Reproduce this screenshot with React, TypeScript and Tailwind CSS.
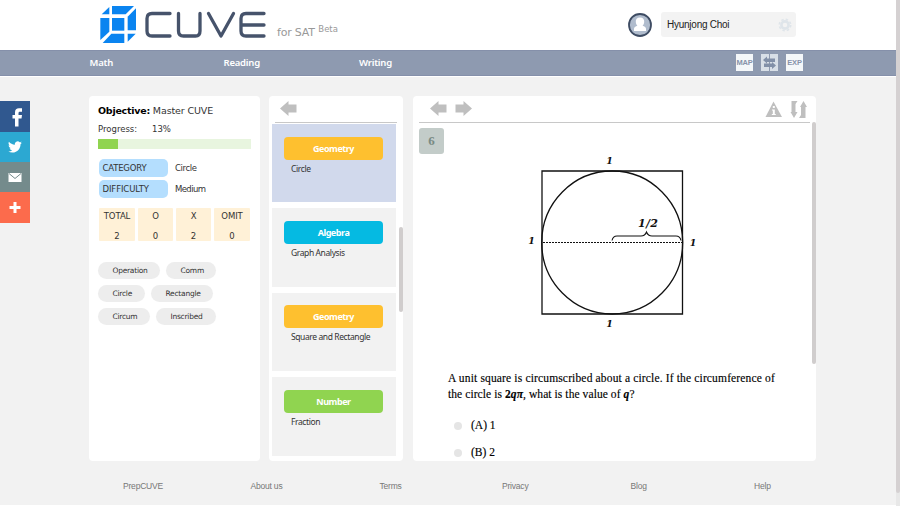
import React from "react";

const verdana = "font-['DejaVu_Sans',sans-serif]";
const noto = "font-['Noto_Sans',sans-serif]";
const arial = "font-['Liberation_Sans',sans-serif]";

function Logo() {
  return (
    <svg className="block" width="170" height="40" viewBox="98 4 170 40" fill="none">
      <g fill="#0a84f0" transform="translate(80 0) scale(.3333)">
        <path d="M96 18h66l-25 25H96z" />
        <path d="M88 21v22H65z" />
        <path d="M96 54h37v38H96z" />
        <path d="M61 54h27v41l-27 25z" />
        <path d="M168 25v66h-25V50z" />
        <path d="M94 101h39v28H68z" />
        <path d="M143 101h24l-24 24z" />
      </g>
      <g stroke="#46536b" strokeWidth="3.300" strokeLinecap="round" strokeLinejoin="round">
        <path d="M170 13.500h-18q-5 0-5 5v12.500q0 5 5 5h18" />
        <path d="M178.500 13.500v17.500q0 5 5 5h12q4.500 0 4.500-5v-17.500" />
        <path d="M208.500 13.500l12.500 22.500 12.500-22.500" />
        <path d="M264 13.500h-18q-5 0-5 5v12.500q0 5 5 5h18M241 25h23" />
      </g>
    </svg>
  );
}

function Arrow({ flip = false }: { flip?: boolean }) {
  return (
    <svg className={flip ? "block -scale-x-100" : "block"} width="17" height="15" viewBox="0 0 17 15" fill="#bfbfbf">
      <path d="M0 7.500L8.500 0v3.500H16.500v8H8.500V15z" />
    </svg>
  );
}

function Header() {
  return (
    <header className="flex h-[50px] bg-white">
      <div className="ml-[98px] mt-1"><Logo /></div>
      <div className={`ml-[9px] mt-[25px] h-5 w-20 whitespace-nowrap text-[11px] leading-[16px] text-[#999] ${verdana}`}>
        <span className="tracking-[-0.2px]">for SAT</span> <span className="relative -top-[4px] text-[8.500px]">Beta</span>
      </div>
      <svg className="ml-[271px] mt-[13px]" width="24" height="24" viewBox="0 0 24 24">
        <circle cx="12" cy="12" r="11" fill="#b0bccd" stroke="#3e4c63" strokeWidth="1.800" />
        <path d="M12 4.500c3 0 4.500 2 4.200 4.600-.2 1.700-.7 2.900-1.600 3.600 2 .8 3.400 1.500 3.400 3v2.300H6v-2.300c0-1.500 1.400-2.200 3.400-3-.9-.7-1.400-1.900-1.600-3.600C7.500 6.500 9 4.500 12 4.500z" fill="#fff" />
      </svg>
      <div className={`ml-[9px] mt-3 flex h-[25px] w-[135px] items-center justify-between rounded-[3px] bg-[#f3f3f3] pl-1.5 pr-1 text-[10px] text-[#222] ${arial}`}>
        <span className="tracking-[-0.25px]">Hyunjong Choi</span>
        <svg width="14" height="14" viewBox="0 0 14 14" fill="none" stroke="#dfe5ea">
          <circle cx="7" cy="7" r="3.600" strokeWidth="2.600" />
          <circle cx="7" cy="7" r="5.700" strokeWidth="1.600" strokeDasharray="2.400 2.080" />
        </svg>
      </div>
    </header>
  );
}

function Nav() {
  return (
    <nav className={`flex h-[26px] border-b border-t border-[#8590aa] bg-[#8e9ab0] text-[9.500px] font-semibold leading-6 tracking-[-0.2px] text-white ${noto}`}>
      <span className="ml-[89.500px] w-[134px]">Math</span>
      <span className="w-[135.500px]">Reading</span>
      <span className="w-[377px]">Writing</span>
      <div className={`mt-[3px] flex gap-2 text-[7.500px] font-bold tracking-[-0.2px] text-[#8793aa] ${arial}`}>
        <span className="h-[17px] w-[17px] bg-[#f4f7f9] p-[3px]"><span className="-mx-[3px] block h-[11px] text-center leading-[12px]">MAP</span></span>
        <svg width="17" height="17" viewBox="0 0 17 17"><path fill="#d8dfe7" d="M0 0h17v17H0z" /><path d="M8.500 0v17" stroke="#8e9ab0" /><path d="M2 6l4-3.500v2h8v3.500H6v1.500zM15 11.500l-4 3.500v-2H3V9.500h8V8z" fill="#8290a8" /></svg>
        <span className="h-[17px] w-[17px] bg-[#f4f7f9] p-[3px]"><span className="-mx-[3px] block h-[11px] text-center leading-[12px]">EXP</span></span>
      </div>
    </nav>
  );
}

function Social() {
  return (
    <aside className="mt-[24px] flex h-[122px] w-[30px] flex-col">
      <div className="h-[31px] bg-[#30588f]"><svg width="30" height="31" viewBox="0 0 30 31"><path fill="#fff" d="M15 25.500v-8H12.500V14H15v-2.500c0-3 1.500-4.200 4-4.200h3v3.500h-2c-1.200 0-1.500.5-1.500 1.500V14H22l-.5 3.500h-3v8z" /></svg></div>
      <div className="h-[30px] bg-[#2ca8d2]"><svg width="30" height="30" viewBox="0 0 30 30"><path transform="translate(8 8) scale(.58)" fill="#fff" d="M23.950 4.570a10 10 0 01-2.820.77 4.960 4.960 0 002.160-2.720c-.95.550-2 .96-3.120 1.180a4.920 4.920 0 00-8.380 4.480C7.690 8.100 4.070 6.130 1.640 3.160a4.820 4.820 0 00-.67 2.480c0 1.710.87 3.210 2.190 4.100a4.900 4.900 0 01-2.230-.62v.06a4.920 4.920 0 003.950 4.830 5 5 0 01-2.210.08 4.940 4.940 0 004.600 3.420A9.870 9.870 0 010 19.540a14 14 0 007.550 2.210c9.050 0 14-7.500 14-13.980 0-.21 0-.42-.02-.63a9.940 9.940 0 002.420-2.570z" /></svg></div>
      <div className="h-[30px] bg-[#748b8c]"><svg width="30" height="30" viewBox="0 0 30 30"><path fill="#fff" d="M8.500 11h13v9h-13z" /><path d="M9 11.500l6 5 6-5" fill="none" stroke="#748b8c" /></svg></div>
      <div className="h-[31px] bg-[#fc6b4c]"><svg width="30" height="31" viewBox="0 0 30 31"><path d="M9.500 15.500h11M15 10v11" stroke="#fff" strokeWidth="3" /></svg></div>
    </aside>
  );
}

function Stat({ label, value, w }: { label: string; value: string; w: string }) {
  return (
    <div className={`flex h-[33px] flex-col justify-between rounded-[1px] bg-[#fff1d7] pt-[3px] text-center text-[8.500px] leading-[10px] ${w}`}>
      <span className="tracking-[-0.1px]">{label}</span><span>{value}</span>
    </div>
  );
}

function Tag({ text, w }: { text: string; w: string }) {
  return <span className={`h-[17px] rounded-full bg-[#ededed] pl-[14.500px] text-[7.500px] leading-[17px] tracking-[-0.25px] ${w}`}>{text}</span>;
}

function Summary() {
  return (
    <section className={`h-[365px] w-[171px] rounded-[4px] bg-white pl-[9px] text-[8.500px] text-[#333] ${verdana}`}>
      <div className="pt-[8px] text-[9.500px] leading-[14px] tracking-[-0.12px]"><b className="tracking-[-0.25px] text-black">Objective:</b> Master CUVE</div>
      <div className="mt-[5px] flex leading-3"><span className="w-[54px]">Progress:</span><span>13%</span></div>
      <div className="mt-1 h-[10px] w-[153px] bg-[#e8f5df]"><div className="h-full w-5 bg-[#90d450]" /></div>
      <div className="ml-px mt-[10px] flex h-[18px] items-center"><span className="h-full w-[69px] rounded-[5px] bg-[#b4defe] pl-[3.500px] leading-[18px] tracking-[-0.2px]">CATEGORY</span><span className="ml-[7px] tracking-[-0.4px]">Circle</span></div>
      <div className="ml-px mt-[3px] flex h-[18px] items-center"><span className="h-full w-[69px] rounded-[5px] bg-[#b4defe] pl-[3.500px] leading-[18px] tracking-[-0.1px]">DIFFICULTY</span><span className="ml-[7px] tracking-[-0.6px]">Medium</span></div>
      <div className="ml-px mt-[10px] flex gap-[3px]">
        <Stat label="TOTAL" value="2" w="w-[36px]" /><Stat label="O" value="0" w="w-[35px]" /><Stat label="X" value="2" w="w-[35px]" /><Stat label="OMIT" value="0" w="w-[36px]" />
      </div>
      <div className="mt-[21px] flex flex-col gap-[6px]">
        <div className="flex gap-[6px]"><Tag text="Operation" w="w-[62px]" /><Tag text="Comm" w="w-[50px]" /></div>
        <div className="flex gap-[6px]"><Tag text="Circle" w="w-[47px]" /><Tag text="Rectangle" w="w-[62px]" /></div>
        <div className="flex gap-[6px]"><Tag text="Circum" w="w-[52px]" /><Tag text="Inscribed" w="w-[60px]" /></div>
      </div>
    </section>
  );
}

function Topic({ name, text, color, bg = "bg-[#f2f2f2]" }: { name: string; text: string; color: string; bg?: string }) {
  return (
    <div className={`h-[78.400px] w-[124px] shrink-0 pl-3 pt-[12.500px] ${bg} ${noto}`}>
      <div className={`h-[23px] w-[99px] rounded-[4px] text-center text-[9px] font-bold leading-[23px] tracking-[-0.45px] text-white ${color}`}>{name}</div>
      <div className="mt-[3px] pl-[7px] text-[8.500px] leading-3 tracking-[-0.4px] text-[#333]">{text}</div>
    </div>
  );
}

function Topics() {
  return (
    <section className="relative h-[365px] w-[134px] overflow-hidden rounded-[4px] bg-white">
      <div className="ml-[6px] flex h-[27px] w-[122px] border-b border-[#c8c8c8] pl-[5px] pt-[5px]"><Arrow /></div>
      <div className="ml-[3px] mt-[1px] flex flex-col gap-[6px]">
        <Topic name="Geometry" text="Circle" color="bg-[#fec02f]" bg="bg-[#d1d9ec]" />
        <Topic name="Algebra" text="Graph Analysis" color="bg-[#05bae2]" />
        <Topic name="Geometry" text="Square and Rectangle" color="bg-[#fec02f]" />
        <Topic name="Number" text="Fraction" color="bg-[#90d450]" />
      </div>
      <div className="absolute right-0 top-[131px] h-[85px] w-1 rounded-full bg-[#d0cdcd]" />
    </section>
  );
}

function Diagram() {
  return (
    <svg className="block" width="190" height="190" viewBox="520 145 190 190" fill="none" stroke="#111" strokeWidth="1.300">
      <path d="M542 171h140.500v143H542z" />
      <ellipse cx="612.200" cy="242.500" rx="70.500" ry="71.500" />
      <path d="M543 242.500h139" strokeDasharray="2 1" strokeWidth="1.100" />
      <path d="M612 240.500q1-4.500 5-4.500h24q4 0 5.500-4q1.500 4 5.500 4h24q4 0 5 4.500" strokeWidth="1.100" />
      <g fill="#111" stroke="none" fontFamily="'DejaVu Serif', serif" fontWeight="bold" fontStyle="italic" fontSize="9.500" textAnchor="middle">
        <text x="609.500" y="164">1</text><text x="531.500" y="244">1</text><text x="693" y="246">1</text><text x="609.500" y="327">1</text><text x="648" y="227" fontSize="11" textLength="20">1/2</text>
      </g>
    </svg>
  );
}

function Choice({ text }: { text: string }) {
  return <div className="flex h-[27px] items-center"><i className="ml-[6px] h-2 w-2 rounded-full bg-[#e5e5e5]" /><span className="ml-[9px] text-[11.500px]">{text}</span></div>;
}

function Question() {
  return (
    <section className="relative h-[365px] w-[403px] overflow-hidden rounded-[4px] bg-white font-['Liberation_Serif',serif] text-black">
      <div className="ml-[6px] flex h-[27px] w-[391px] border-b border-[#c8c8c8] pt-[5px]">
        <div className="ml-[11px] flex gap-2"><Arrow /><Arrow flip /></div>
        <svg className="ml-auto mr-[3px]" width="42" height="18" viewBox="763 100 42 18" fill="#bfbfbf">
          <path d="M771.500 100.500l8.500 15.500h-16.500z" /><path d="M770.800 105h2v2h-2zM770 108.500h2.800v4.500h1v1h-4v-1h1v-3.500h-.8z" fill="#fff" />
          <path d="M789.500 100h6l-2 3v8h2l-3.500 6-3.500-6h1zM801.500 100l3.500 6h-1.500v11H797l2-3v-8h-1z" />
        </svg>
      </div>
      <div className="ml-[6px] mt-[5px] h-[26px] w-[25px] rounded-[3px] bg-[#c3ccc9] text-center text-[13px] font-bold leading-[26px] text-[#798b84]">6</div>
      <div className="-mt-[9px] ml-[107px]"><Diagram /></div>
      <div className="ml-[35px] mt-[36px] w-[345px] whitespace-nowrap text-[11.500px] leading-[15.500px] [-webkit-text-stroke:0.15px_#000]">
        <div className="tracking-[0.155px]">A unit square is circumscribed about a circle. If the circumference of</div>
        <div className="tracking-[0.08px]">the circle is <b>2</b><b><i>qπ</i></b>, what is the value of <b><i>q</i></b>?</div>
        <div className="mt-[10.500px]"><Choice text="(A) 1" /><Choice text="(B) 2" /></div>
      </div>
      <div className="absolute right-0 top-[26px] h-[242px] w-1 rounded-full bg-[#d0cdcd]" />
    </section>
  );
}

export default function App() {
  return (
    <div className="flex h-[506px] w-[900px] overflow-hidden bg-[#f2f2f2]">
      <div className="w-[896px]">
        <Header />
        <Nav />
        <div className="flex h-[386px] border-t border-white">
          <Social />
          <main className="ml-[59px] mt-[19px] flex h-[365px]">
            <Summary />
            <div className="ml-[9px]"><Topics /></div>
            <div className="ml-[10px]"><Question /></div>
          </main>
        </div>
        <footer className={`flex h-[43px] pl-[123px] pt-[18px] text-[8.500px] leading-3 tracking-[-0.2px] text-[#777] ${arial}`}>
          <span className="w-[127.500px]">PrepCUVE</span><span className="w-[129px]">About us</span><span className="w-[122.500px]">Terms</span><span className="w-[128.500px]">Privacy</span><span className="w-[123.500px]">Blog</span><span>Help</span>
        </footer>
        <div className="h-px bg-white" />
      </div>
      <div className="h-full w-1 bg-[#e8e8e8]"><div className="h-[493px] rounded-b-sm bg-[#d5d1d2]" /></div>
    </div>
  );
}
